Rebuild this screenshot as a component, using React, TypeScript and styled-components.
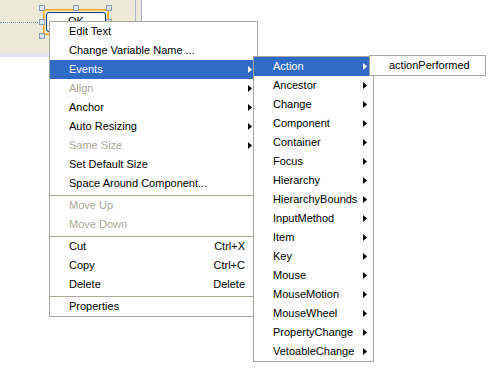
import * as React from 'react'
import styled, { createGlobalStyle, css } from 'styled-components'

const GlobalStyle = createGlobalStyle`
  html, body {
    margin: 0;
    padding: 0;
    background: #ffffff;
  }
  body {
    font-family: 'Liberation Sans', Arial, sans-serif;
    font-size: 11px;
  }
`

const Screen = styled.div`
  position: relative;
  width: 489px;
  height: 372px;
  overflow: hidden;
  background: #ffffff;
`

const DesignPanel = styled.div`
  display: flex;
  width: 141px;
  height: 53px;
  background: #ece9d8;
  border-right: 1px solid #a9b6cc;
`

const FormArea = styled.div`
  position: relative;
  width: 135px;
  height: 100%;
  border-right: 1px solid #a9b6cc;
`

const BottomStrip = styled.div`
  width: 136px;
  height: 4px;
  background: #e3e3f3;
`

const GuideLine = styled.div`
  position: absolute;
  left: 0;
  top: 22px;
  width: 40px;
  border-top: 1px dotted #6f9ad0;
`

/* selection frame around the designed button: 3x3 grid of handles */
const SelectionFrame = styled.div`
  position: absolute;
  left: 39px;
  top: 5px;
  width: 73px;
  height: 34px;
  display: grid;
  grid-template-columns: 6px 1fr 6px;
  grid-template-rows: 6px 1fr 6px;
  justify-items: center;
  align-items: center;
`

const Selection = styled.div`
  grid-column: 1 / 4;
  grid-row: 1 / 4;
  justify-self: stretch;
  align-self: stretch;
  margin: 4px 3px 4px 4px;
  border: 1px solid #f5a623;
  box-shadow: 0 0 0 1px #ffc860 inset;
  display: flex;
  padding: 2px;
`

const OkButton = styled.div`
  flex: 1;
  box-sizing: border-box;
  border: 1px solid #003c74;
  border-radius: 3px;
  background: linear-gradient(#ffffff, #f0f0ea);
  display: flex;
  justify-content: center;
  padding-top: 2px;
  font-size: 11px;
  color: #000;
`

const Handle = styled.div<{ $col: number; $row: number }>`
  grid-column: ${({ $col }) => $col};
  grid-row: ${({ $row }) => $row};
  width: 4px;
  height: 4px;
  background: #dde6f2;
  border: 1px solid #8a9bb4;
  z-index: 1;
`

const Menu = styled.div<{ $left: number; $top: number; $width: number; $layer: number }>`
  position: absolute;
  z-index: ${({ $layer }) => $layer};
  left: ${({ $left }) => $left}px;
  top: ${({ $top }) => $top}px;
  width: ${({ $width }) => $width}px;
  box-sizing: border-box;
  background: #ffffff;
  border: 1px solid #a7a6a0;
  font-family: 'Liberation Sans', Arial, sans-serif;
  font-size: 11px;
`

const Item = styled.div<{ $active?: boolean; $disabled?: boolean; $pl?: number; $pr?: number }>`
  display: grid;
  grid-template-columns: 1fr auto 4px;
  align-items: center;
  height: 19px;
  padding-left: ${({ $pl }) => $pl ?? 18}px;
  padding-right: ${({ $pr }) => $pr ?? 5}px;
  padding-bottom: 1px;
  box-sizing: border-box;
  color: #000;
  white-space: nowrap;
  ${({ $disabled }) =>
    $disabled &&
    css`
      color: #aca899;
    `}
  ${({ $active }) =>
    $active &&
    css`
      background: #316ac5;
      color: #fff;
    `}
`

const Shortcut = styled.span`
  margin-right: 3px;
`

const Separator = styled.div`
  height: 3px;
  box-sizing: border-box;
  padding-top: 2px;
  &::after {
    content: '';
    display: block;
    border-top: 1px solid #aca899;
  }
`

const Arrow = ({ color }: { color: string }) => (
  <svg width="4" height="7" viewBox="0 0 4 7">
    <polygon points="0,0 4,3.5 0,7" fill={color} />
  </svg>
)

type Entry =
  | { label: string; sub?: boolean; disabled?: boolean; active?: boolean; shortcut?: string }
  | 'sep'

const mainItems: Entry[] = [
  { label: 'Edit Text' },
  { label: 'Change Variable Name ...' },
  { label: 'Events', sub: true, active: true },
  { label: 'Align', sub: true, disabled: true },
  { label: 'Anchor', sub: true },
  { label: 'Auto Resizing', sub: true },
  { label: 'Same Size', sub: true, disabled: true },
  { label: 'Set Default Size' },
  { label: 'Space Around Component...' },
  'sep',
  { label: 'Move Up', disabled: true },
  { label: 'Move Down', disabled: true },
  'sep',
  { label: 'Cut', shortcut: 'Ctrl+X' },
  { label: 'Copy', shortcut: 'Ctrl+C' },
  { label: 'Delete', shortcut: 'Delete' },
  'sep',
  { label: 'Properties' },
]

const eventItems = [
  'Action',
  'Ancestor',
  'Change',
  'Component',
  'Container',
  'Focus',
  'Hierarchy',
  'HierarchyBounds',
  'InputMethod',
  'Item',
  'Key',
  'Mouse',
  'MouseMotion',
  'MouseWheel',
  'PropertyChange',
  'VetoableChange',
]

const renderEntries = (entries: Entry[], pl: number, pr: number) =>
  entries.map((e, i) => {
    if (e === 'sep') return <Separator key={i} />
    const arrowColor = e.active ? '#fff' : '#000'
    return (
      <Item key={i} $active={e.active} $disabled={e.disabled} $pl={pl} $pr={pr}>
        <span>{e.label}</span>
        {e.shortcut ? <Shortcut>{e.shortcut}</Shortcut> : <span />}
        {e.sub ? <Arrow color={arrowColor} /> : <span />}
      </Item>
    )
  })

const handles = [
  [1, 1],
  [2, 1],
  [3, 1],
  [1, 2],
  [3, 2],
  [1, 3],
  [2, 3],
  [3, 3],
]

export default function App() {
  return (
    <Screen>
      <GlobalStyle />
      <DesignPanel>
        <FormArea>
          <GuideLine />
          <SelectionFrame>
            <Selection>
              <OkButton>OK</OkButton>
            </Selection>
            {handles.map(([c, r]) => (
              <Handle key={`${c}-${r}`} $col={c} $row={r} />
            ))}
          </SelectionFrame>
        </FormArea>
      </DesignPanel>
      <BottomStrip />

      <Menu $left={49} $top={21} $width={209} $layer={10}>
        {renderEntries(mainItems, 19, 5)}
      </Menu>

      <Menu $left={253} $top={56} $width={121} $layer={11}>
        {renderEntries(
          eventItems.map((label, i) => ({ label, sub: true, active: i === 0 })),
          19,
          6
        )}
      </Menu>

      <Menu $left={369} $top={55} $width={117} $layer={12}>
        <Item $pl={19} $pr={4}>
          <span>actionPerformed</span>
          <span />
          <span />
        </Item>
      </Menu>
    </Screen>
  )
}
